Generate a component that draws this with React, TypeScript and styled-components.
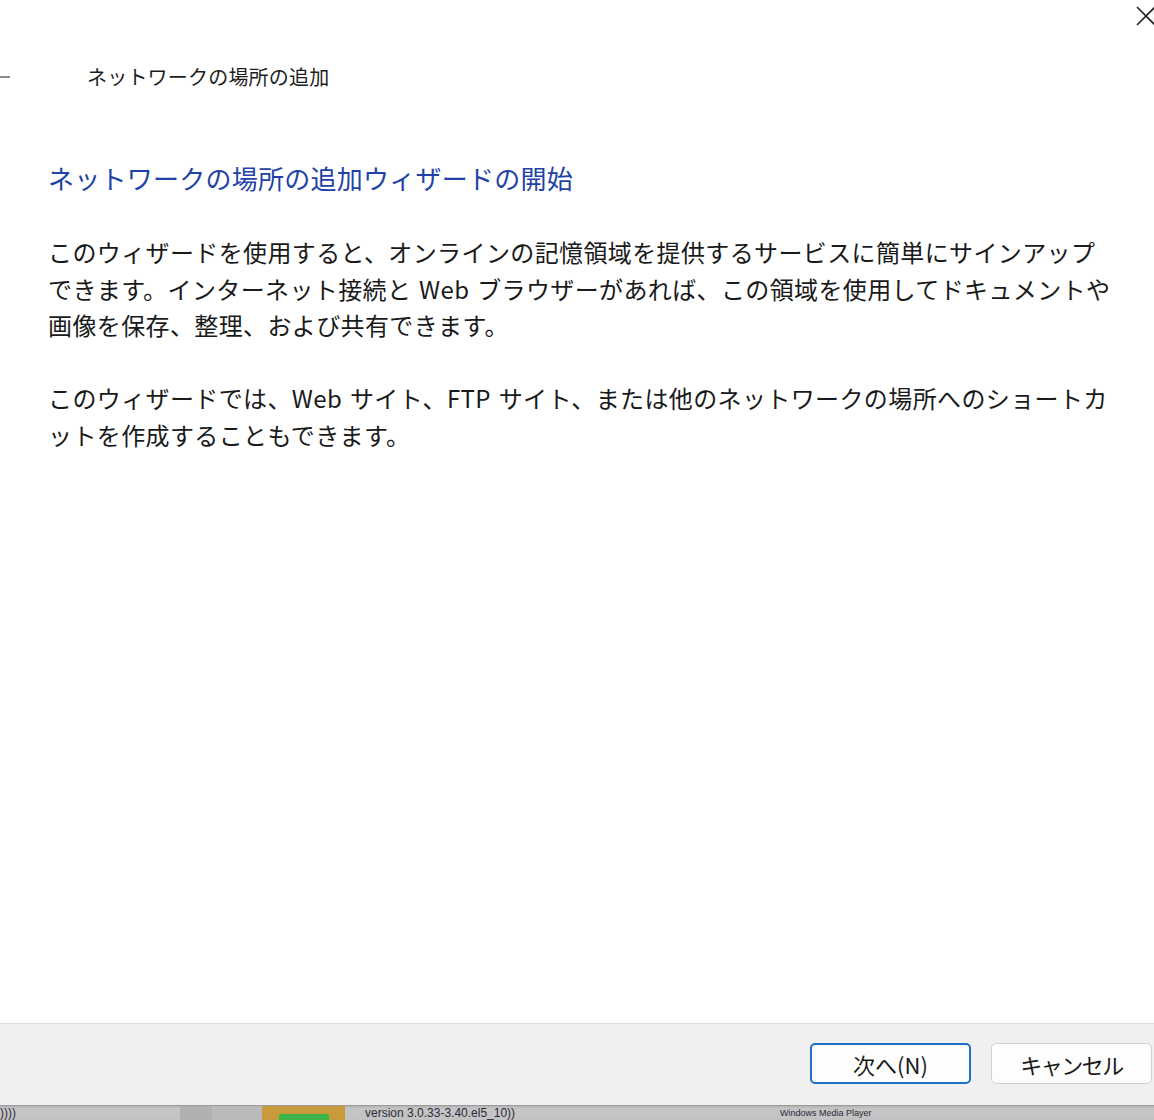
import styled, { createGlobalStyle } from "styled-components";

const GlobalStyle = createGlobalStyle`
  html, body {
    margin: 0;
    padding: 0;
    background: #ffffff;
  }
  body {
    font-family: "Noto Sans CJK JP", "Noto Sans", sans-serif;
    color: #1a1a1a;
  }
`;

const Window = styled.div`
  width: 1154px;
  height: 1120px;
  display: flex;
  flex-direction: column;
  background: #ffffff;
  overflow: hidden;
`;

const TopBar = styled.div`
  height: 32px;
  display: flex;
  justify-content: flex-end;
  align-items: flex-start;
`;

const CloseButton = styled.button`
  width: 24px;
  height: 24px;
  margin-top: 4px;
  margin-right: -4px;
  padding: 0;
  border: none;
  background: transparent;
  display: flex;
  align-items: center;
  justify-content: center;
`;

const TitleRow = styled.div`
  margin-top: 28px;
  height: 34px;
  display: flex;
  align-items: center;
`;

const BackArrow = styled.div`
  width: 87px;
  margin-left: -14px;
  display: flex;
  align-items: center;
`;

const WindowTitle = styled.div`
  font-size: 20px;
  line-height: 34px;
  letter-spacing: 0.2px;
  color: #1e1e1e;
  margin-left: 14px;
`;

const Content = styled.div`
  padding-left: 48px;
  display: flex;
  flex-direction: column;
`;

const Heading = styled.h1`
  margin: 66px 0 0;
  font-size: 26px;
  line-height: 36px;
  letter-spacing: 0.25px;
  font-weight: 400;
  color: #1f43a6;
  white-space: nowrap;
`;

const Paragraph = styled.p<{ $first?: boolean }>`
  margin: ${(p) => (p.$first ? "38px" : "36.5px")} 0 0;
  font-size: 24px;
  line-height: 36.5px;
  letter-spacing: 0.38px;
  word-spacing: 2px;
  color: #1a1a1a;
  white-space: nowrap;
`;

const Spacer = styled.div`
  flex: 1;
`;

const Footer = styled.div`
  height: 82px;
  box-sizing: border-box;
  border-top: 1px solid #dedede;
  background: #f0f0f0;
  display: flex;
  justify-content: flex-end;
  align-items: flex-start;
  gap: 20px;
  padding: 19px 2px 0 0;
`;

const Button = styled.button<{ $primary?: boolean }>`
  width: 161px;
  height: 41px;
  box-sizing: border-box;
  border-radius: 5px;
  background: #fdfdfd;
  border: ${(p) => (p.$primary ? "2px solid #1f6fc6" : "1px solid #d0d0d0")};
  font-family: "Noto Sans CJK JP", "Noto Sans", sans-serif;
  font-size: 22px;
  letter-spacing: ${(p) => (p.$primary ? "0" : "-1.5px")};
  color: #1a1a1a;
  padding: 0;
  display: flex;
  align-items: center;
  justify-content: center;
`;

const Taskbar = styled.div`
  height: 15px;
  box-sizing: border-box;
  background: linear-gradient(#b4b4b4, #c6c6c6 3px, #c2c2c2);
  border-top: 1px solid #9a9a9a;
  display: flex;
  align-items: center;
  overflow: hidden;
`;

const TaskText = styled.span<{ $width: number; $small?: boolean }>`
  width: ${(p) => p.$width}px;
  flex-shrink: 0;
  font-family: "Liberation Sans", sans-serif;
  font-size: ${(p) => (p.$small ? "9px" : "12px")};
  line-height: 13px;
  color: #2a2a3a;
  white-space: nowrap;
`;

const TaskIcon = styled.div`
  width: 83px;
  height: 14px;
  flex-shrink: 0;
  background: #c99a3c;
  margin-right: 20px;
  display: flex;
  justify-content: center;
  align-items: flex-end;
`;

const TaskIconInner = styled.div`
  width: 50px;
  height: 6px;
  background: #3cb44a;
`;

const TaskSep = styled.div<{ $width: number }>`
  width: ${(p) => p.$width}px;
  height: 14px;
  flex-shrink: 0;
  background: ${(p) => (p.$width > 40 ? "#bababa" : "#b0b0b0")};
`;

export default function App() {
  return (
    <>
      <GlobalStyle />
      <Window>
        <TopBar>
          <CloseButton aria-label="閉じる">
            <svg width="22" height="22" viewBox="0 0 22 22">
              <path d="M2 2 L20 20 M20 2 L2 20" stroke="#222" strokeWidth="1.6" fill="none" />
            </svg>
          </CloseButton>
        </TopBar>
        <TitleRow>
          <BackArrow>
            <svg width="26" height="20" viewBox="0 0 26 20">
              <path d="M2 10 H24 M10 2 L2 10 L10 18" stroke="#8a8a8a" strokeWidth="2" fill="none" />
            </svg>
          </BackArrow>
          <WindowTitle>ネットワークの場所の追加</WindowTitle>
        </TitleRow>
        <Content>
          <Heading>ネットワークの場所の追加ウィザードの開始</Heading>
          <Paragraph $first>
            このウィザードを使用すると、オンラインの記憶領域を提供するサービスに簡単にサインアップ
            <br />
            できます。インターネット接続と Web ブラウザーがあれば、この領域を使用してドキュメントや
            <br />
            画像を保存、整理、および共有できます。
          </Paragraph>
          <Paragraph>
            このウィザードでは、Web サイト、FTP サイト、または他のネットワークの場所へのショートカ
            <br />
            ットを作成することもできます。
          </Paragraph>
        </Content>
        <Spacer />
        <Footer>
          <Button $primary>次へ(N)</Button>
          <Button>キャンセル</Button>
        </Footer>
        <Taskbar>
          <TaskText $width={180}>))))</TaskText>
          <TaskSep $width={32} />
          <TaskSep $width={50} />
          <TaskIcon>
            <TaskIconInner />
          </TaskIcon>
          <TaskText $width={415}>version 3.0.33-3.40.el5_10))</TaskText>
          <TaskText $width={120} $small>Windows Media Player</TaskText>
        </Taskbar>
      </Window>
    </>
  );
}
